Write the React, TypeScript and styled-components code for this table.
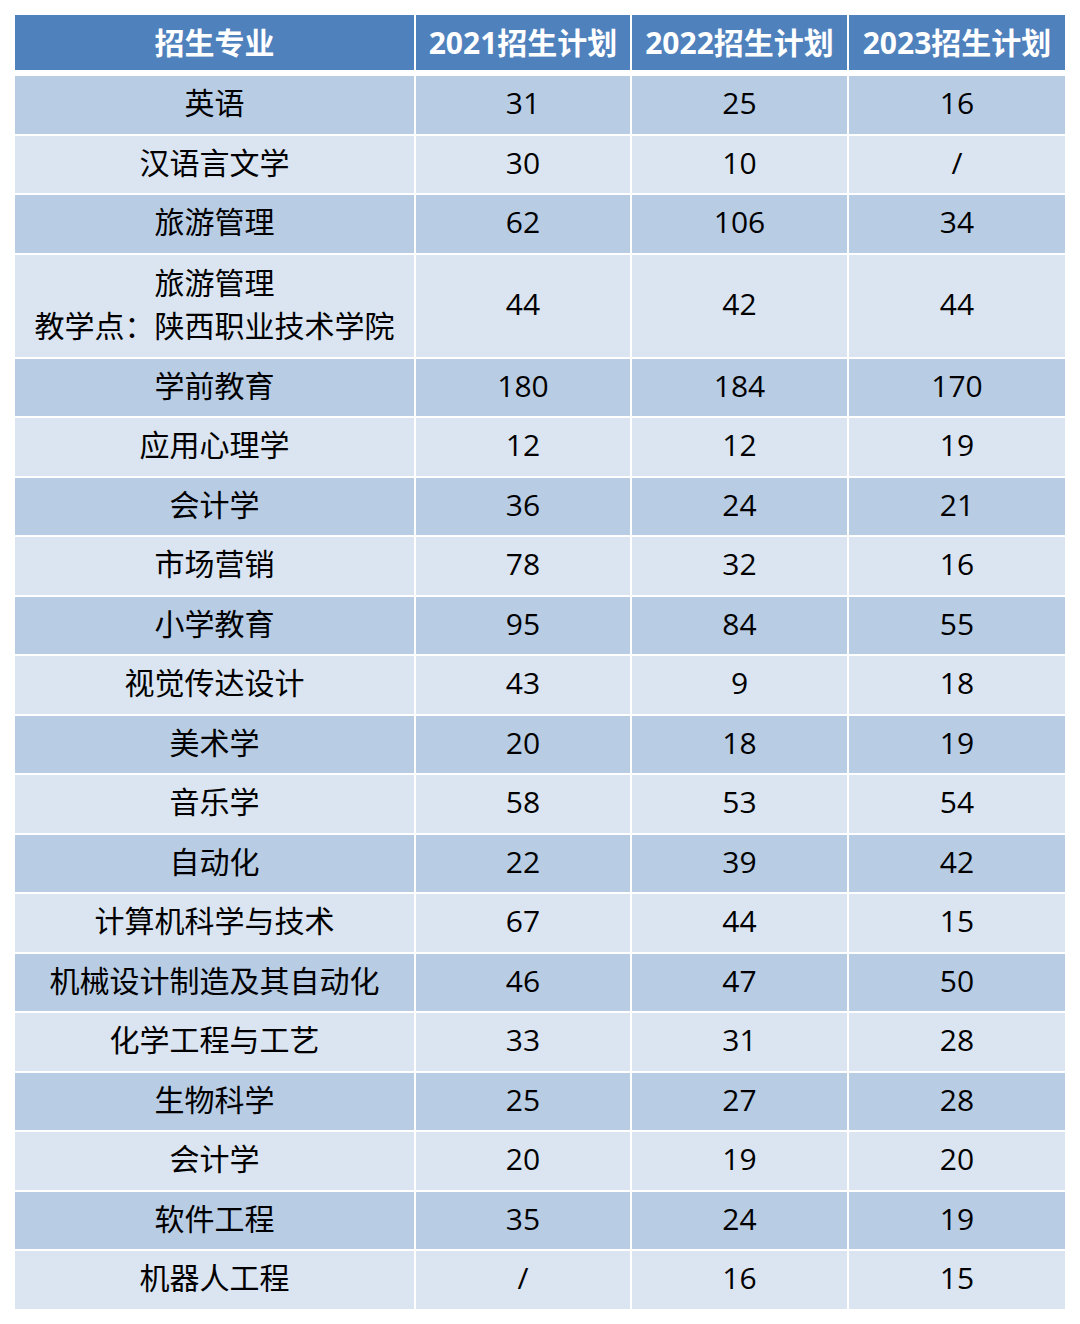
import React from "react";
import styled, { createGlobalStyle } from "styled-components";

const GlobalStyle = createGlobalStyle`
  html, body {
    margin: 0;
    padding: 0;
    background: #ffffff;
  }
  body {
    font-family: "Open Sans", "Noto Sans CJK SC", sans-serif;
  }
`;

const Page = styled.div`
  padding: 15px;
  width: 1080px;
  box-sizing: border-box;
`;

const Table = styled.div`
  display: flex;
  flex-direction: column;
  gap: 2px;
  width: 1050px;
`;

const RowGrid = styled.div<{ $tall?: boolean; $head?: boolean }>`
  display: grid;
  grid-template-columns: 399px 214px 215px 216px;
  column-gap: 2px;
  height: ${(p) => (p.$head ? "55px" : p.$tall ? "102px" : "57.5px")};
  margin-bottom: ${(p) => (p.$head ? "4px" : "0")};
`;

const HeadCell = styled.div`
  background: #4f81bd;
  color: #ffffff;
  font-weight: 700;
  font-size: 30px;
  line-height: 40px;
  display: flex;
  align-items: center;
  justify-content: center;
  white-space: nowrap;
  padding-top: 1px;
`;

const Cell = styled.div<{ $tone: "dark" | "light" }>`
  background: ${(p) => (p.$tone === "dark" ? "#b8cce4" : "#dbe5f1")};
  color: #000000;
  font-size: 30px;
  line-height: 43px;
  display: flex;
  flex-direction: column;
  align-items: center;
  justify-content: center;
  text-align: center;
  white-space: nowrap;
  padding-bottom: 4px;
`;

type RowData = { name: string[]; v: [string, string, string] };

const rows: RowData[] = [
  { name: ["英语"], v: ["31", "25", "16"] },
  { name: ["汉语言文学"], v: ["30", "10", "/"] },
  { name: ["旅游管理"], v: ["62", "106", "34"] },
  { name: ["旅游管理", "教学点：陕西职业技术学院"], v: ["44", "42", "44"] },
  { name: ["学前教育"], v: ["180", "184", "170"] },
  { name: ["应用心理学"], v: ["12", "12", "19"] },
  { name: ["会计学"], v: ["36", "24", "21"] },
  { name: ["市场营销"], v: ["78", "32", "16"] },
  { name: ["小学教育"], v: ["95", "84", "55"] },
  { name: ["视觉传达设计"], v: ["43", "9", "18"] },
  { name: ["美术学"], v: ["20", "18", "19"] },
  { name: ["音乐学"], v: ["58", "53", "54"] },
  { name: ["自动化"], v: ["22", "39", "42"] },
  { name: ["计算机科学与技术"], v: ["67", "44", "15"] },
  { name: ["机械设计制造及其自动化"], v: ["46", "47", "50"] },
  { name: ["化学工程与工艺"], v: ["33", "31", "28"] },
  { name: ["生物科学"], v: ["25", "27", "28"] },
  { name: ["会计学"], v: ["20", "19", "20"] },
  { name: ["软件工程"], v: ["35", "24", "19"] },
  { name: ["机器人工程"], v: ["/", "16", "15"] },
];

const headers = ["招生专业", "2021招生计划", "2022招生计划", "2023招生计划"];

export default function App() {
  return (
    <>
      <GlobalStyle />
      <Page>
        <Table>
          <RowGrid $head>
            {headers.map((h) => (
              <HeadCell key={h}>{h}</HeadCell>
            ))}
          </RowGrid>
          {rows.map((r, i) => {
            const tone = i % 2 === 0 ? "dark" : "light";
            return (
              <RowGrid key={i} $tall={r.name.length > 1}>
                <Cell $tone={tone}>
                  {r.name.map((n) => (
                    <span key={n}>{n}</span>
                  ))}
                </Cell>
                {r.v.map((val, j) => (
                  <Cell key={j} $tone={tone}>
                    {val}
                  </Cell>
                ))}
              </RowGrid>
            );
          })}
        </Table>
      </Page>
    </>
  );
}
